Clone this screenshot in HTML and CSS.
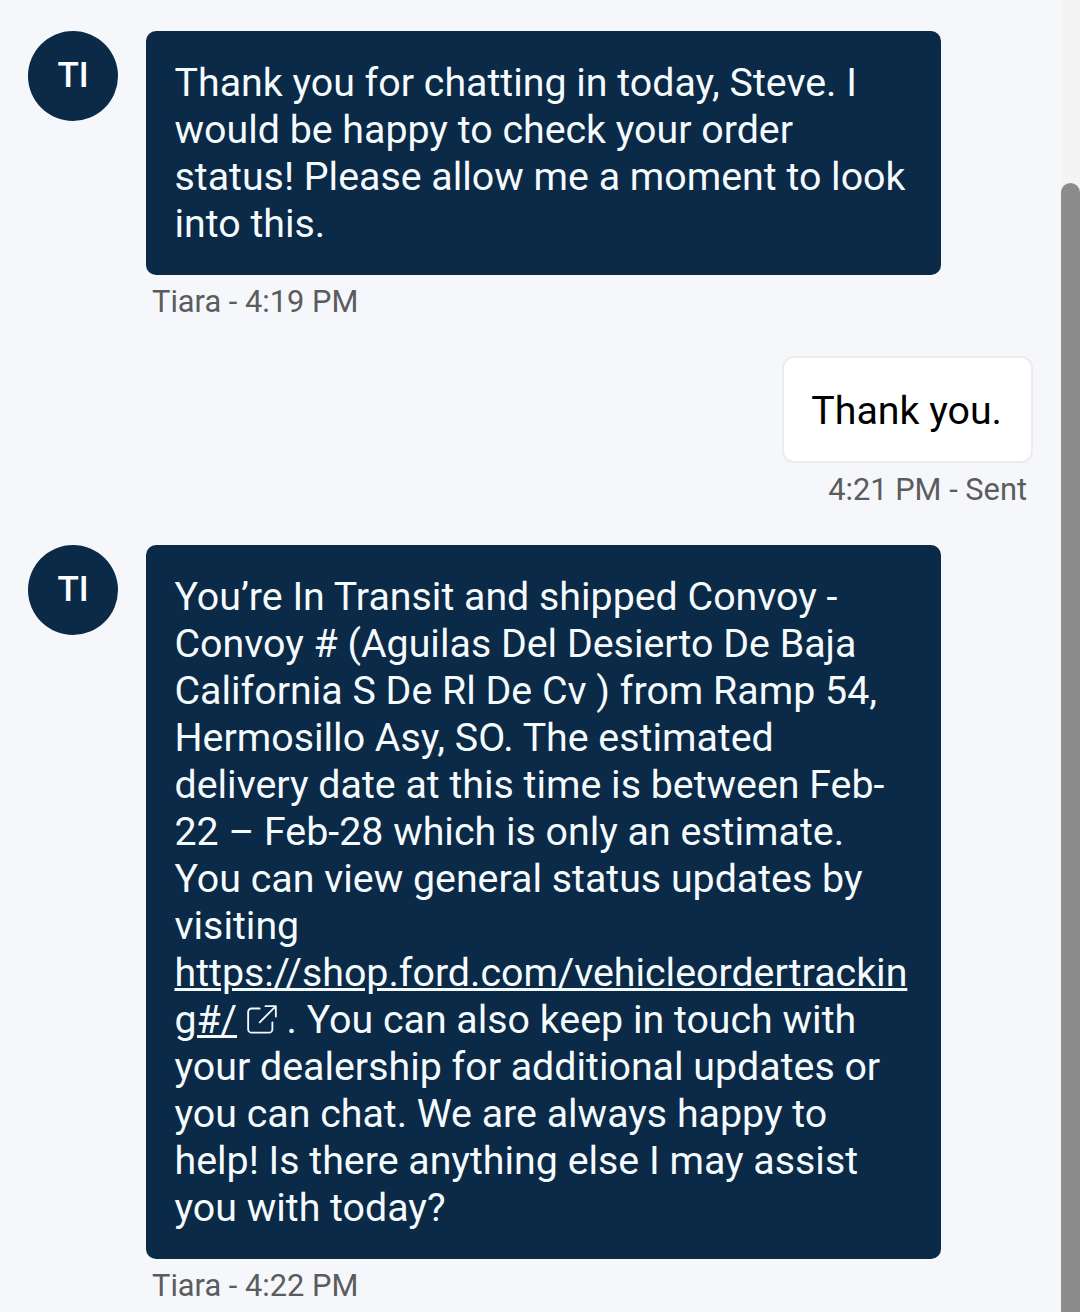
FILE: index.html
```html
<!DOCTYPE html>
<html lang="en">
<head>
    <meta charset="UTF-8">
    <meta name="viewport" content="width=device-width, initial-scale=1.0">
    <title>Chat</title>

    <link rel="stylesheet" href="styles.css">
</head>
<body>
    <div class="page">
        <div class="chat">
            <div class="message agent">
                <div class="avatar">TI</div>
                <div class="content">
                    <div class="bubble">Thank you for chatting in today, Steve. I would be happy to check your order status! Please allow me a moment to look into this.</div>
                    <div class="meta">Tiara - 4:19 PM</div>
                </div>
            </div>

            <div class="message user">
                <div class="content">
                    <div class="bubble">Thank you.</div>
                    <div class="meta">4:21 PM - Sent</div>
                </div>
            </div>

            <div class="message agent">
                <div class="avatar">TI</div>
                <div class="content">
                    <div class="bubble">You’re In Transit and shipped Convoy - Convoy # (Aguilas Del Desierto De Baja California S De Rl De Cv ) from Ramp 54, Hermosillo Asy, SO. The estimated delivery date at this time is between Feb-22 – Feb-28 which is only an estimate. You can view general status updates by visiting <a class="link" href="#">https://shop.ford.com/vehicleordertracking#/</a>
                        <svg class="external" viewBox="2 2 26 26" fill="none" stroke="currentColor" stroke-width="1.6" stroke-linecap="round" stroke-linejoin="round">
                            <path d="M13 5H6a3 3 0 0 0-3 3v15a3 3 0 0 0 3 3h15a3 3 0 0 0 3-3v-6"/>
                            <path d="M13 17 27 3M18 3h9v9"/>
                        </svg> . You can also keep in touch with your dealership for additional updates or you can chat. We are always happy to help! Is there anything else I may assist you with today?</div>
                    <div class="meta">Tiara - 4:22 PM</div>
                </div>
            </div>
        </div>

        <div class="scrollbar">
            <div class="thumb"></div>
        </div>
    </div>
</body>
</html>
```

FILE: styles.css
```css
* {
    box-sizing: border-box;
}

html,
body {
    height: 100%;
    margin: 0;
    overflow: hidden;
}

body {
    background-color: #f6f7fb;
    color: #000;
    font-family: Roboto, 'Liberation Sans', sans-serif;
}

.page {
    display: flex;
    height: 1312px;
}

.chat {
    flex: 1;
    padding: 31px 28px 0 28px;
}

.message {
    display: flex;
    gap: 28px;
    margin-bottom: 36px;
}

.message.user {
    justify-content: flex-end;
    margin-bottom: 37px;
}

.avatar {
    flex: none;
    width: 90px;
    height: 90px;
    padding-top: 24px;
    border-radius: 50%;
    background-color: #0a2a47;
    color: #fff;
    font-size: 35px;
    font-weight: 500;
    line-height: 42px;
    text-align: center;
}

.agent .content {
    width: 795px;
}

.bubble {
    font-size: 39.35px;
    line-height: 47px;
    border-radius: 10px;
}

.agent .bubble {
    padding: 29px 29px 27px 28.5px;
    background-color: #0a2a47;
    color: #f5fafd;
}

.user .bubble {
    padding: 30px 29px 26px 27px;
    background-color: #fff;
    border: 2px solid #ececee;
    border-radius: 12px;
}

.meta {
    margin-top: 9px;
    padding: 0 6px;
    color: #5b5c5e;
    font-size: 30.8px;
    line-height: 36px;
}

.user .meta {
    text-align: right;
}

.link {
    color: inherit;
    overflow-wrap: anywhere;
}

.external {
    width: 30px;
    height: 30px;
    vertical-align: -2px;
}

.scrollbar {
    flex: none;
    width: 19px;
    padding-top: 183px;
    background-color: #f4f4f5;
}

.thumb {
    height: 100%;
    border-radius: 10px 10px 0 0;
    background-color: #8c8c8c;
}
```
